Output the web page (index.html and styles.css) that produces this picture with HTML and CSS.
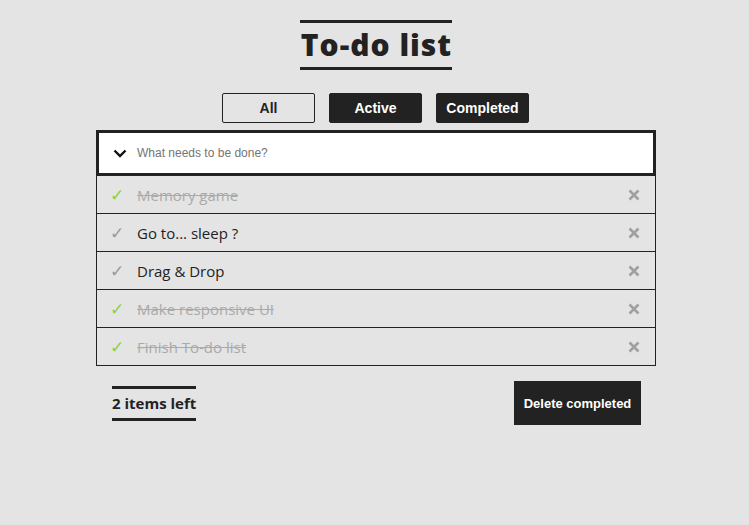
FILE: index.html
```html
<!DOCTYPE html>
<html>
<head>
<meta charset="utf-8">
<link rel="stylesheet" href="styles.css">
</head>
<body>
<div class="app">
  <h1 class="title">To-do list</h1>
  <div class="filters">
    <button class="filter filter-light">All</button>
    <button class="filter">Active</button>
    <button class="filter">Completed</button>
  </div>
  <div class="list">
    <div class="new-todo">
      <svg class="chevron" width="14" height="9" viewBox="0 0 14 9"><path d="M1.5 1.5 L7 7 L12.5 1.5" fill="none" stroke="#111" stroke-width="2.4"/></svg>
      <span class="placeholder">What needs to be done?</span>
    </div>
    <div class="item done"><span class="check">✓</span><span class="text">Memory game</span><svg class="del" width="12" height="12" viewBox="0 0 12 12"><path d="M1.5 1.5 L10.5 10.5 M10.5 1.5 L1.5 10.5" stroke="#a0a0a0" stroke-width="2.6"/></svg></div>
    <div class="item"><span class="check">✓</span><span class="text">Go to... sleep ?</span><svg class="del" width="12" height="12" viewBox="0 0 12 12"><path d="M1.5 1.5 L10.5 10.5 M10.5 1.5 L1.5 10.5" stroke="#a0a0a0" stroke-width="2.6"/></svg></div>
    <div class="item"><span class="check">✓</span><span class="text">Drag &amp; Drop</span><svg class="del" width="12" height="12" viewBox="0 0 12 12"><path d="M1.5 1.5 L10.5 10.5 M10.5 1.5 L1.5 10.5" stroke="#a0a0a0" stroke-width="2.6"/></svg></div>
    <div class="item done"><span class="check">✓</span><span class="text">Make responsive UI</span><svg class="del" width="12" height="12" viewBox="0 0 12 12"><path d="M1.5 1.5 L10.5 10.5 M10.5 1.5 L1.5 10.5" stroke="#a0a0a0" stroke-width="2.6"/></svg></div>
    <div class="item done"><span class="check">✓</span><span class="text">Finish To-do list</span><svg class="del" width="12" height="12" viewBox="0 0 12 12"><path d="M1.5 1.5 L10.5 10.5 M10.5 1.5 L1.5 10.5" stroke="#a0a0a0" stroke-width="2.6"/></svg></div>
  </div>
  <div class="footer">
    <span class="count">2 items left</span>
    <button class="clear">Delete completed</button>
  </div>
</div>
</body>
</html>
```
FILE: styles.css
```css
html, body {
  margin: 0;
  padding: 0;
  background: #e4e4e4;
}
body {
  padding-top: 20px;
  font-family: "Open Sans", "Liberation Sans", sans-serif;
  color: #222;
}
.app {
  width: 560px;
  margin: 0 auto;
  padding-left: 3px;
  display: flex;
  flex-direction: column;
  align-items: center;
}
.title {
  margin: 0;
  border-top: 3px solid #222;
  border-bottom: 3px solid #222;
  font-size: 30px;
  font-weight: 800;
  line-height: 44px;
  color: #222;
  letter-spacing: 1px;
  padding-left: 1px;
}
.filters {
  display: flex;
  gap: 14px;
  margin-top: 23px;
  padding-right: 1px;
}
.filter {
  width: 93px;
  height: 30px;
  border: 1px solid #222;
  border-radius: 2px;
  background: #222;
  color: #fff;
  font-family: "Liberation Sans", Arial, sans-serif;
  font-weight: 700;
  font-size: 14px;
  padding: 0;
}
.filter-light {
  background: #e4e4e4;
  color: #222;
}
.list {
  margin-top: 7px;
  width: 560px;
  display: flex;
  flex-direction: column;
}
.new-todo {
  height: 40px;
  border: 3px solid #222;
  background: #fff;
  display: flex;
  align-items: center;
  padding-left: 14px;
}
.chevron {
  margin-top: 1px;
}
.placeholder {
  margin-left: 10px;
  font-family: "Liberation Sans", Arial, sans-serif;
  font-size: 12px;
  color: #757575;
}
.item {
  height: 37px;
  border: 1px solid #222;
  border-top: none;
  display: flex;
  align-items: center;
  padding-left: 13px;
  padding-right: 15px;
}
.check {
  width: 27px;
  color: #999;
  font-family: "DejaVu Sans", sans-serif;
  font-size: 17px;
}
.done .check {
  color: #8bd33a;
}
.text {
  flex: 1;
  font-size: 15px;
  color: #222;
}
.done .text {
  color: #aaa;
  text-decoration: line-through;
}
.del {
  display: block;
}
.footer {
  width: 560px;
  display: flex;
  justify-content: space-between;
  align-items: center;
  margin-top: 15px;
}
.count {
  margin-left: 16px;
  border-top: 3px solid #222;
  border-bottom: 3px solid #222;
  font-weight: 700;
  font-size: 15px;
  line-height: 29px;
}
.clear {
  margin-right: 15px;
  width: 127px;
  height: 44px;
  border: none;
  background: #222;
  color: #fff;
  font-family: "Liberation Sans", Arial, sans-serif;
  font-weight: 700;
  font-size: 13px;
  padding: 0;
}
```
